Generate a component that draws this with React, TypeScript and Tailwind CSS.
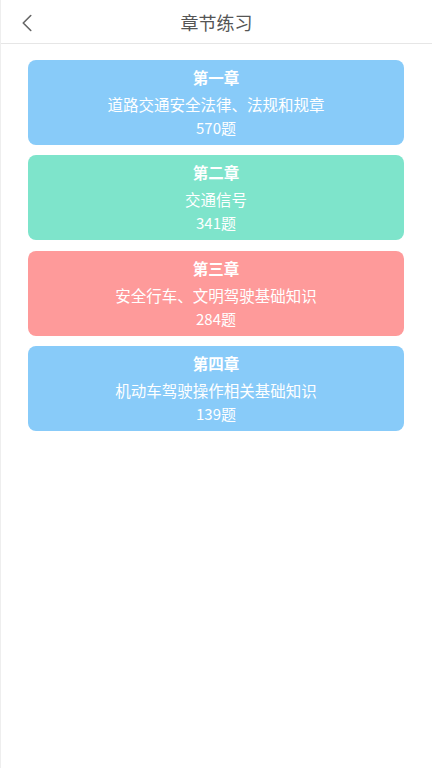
import { ChevronLeft } from 'lucide-react'

const chapters = [
  { title: '第一章', name: '道路交通安全法律、法规和规章', count: 570, color: 'bg-[#88cbf9]' },
  { title: '第二章', name: '交通信号', count: 341, color: 'bg-[#7ee4cb]' },
  { title: '第三章', name: '安全行车、文明驾驶基础知识', count: 284, color: 'bg-[#fe9a9a]' },
  { title: '第四章', name: '机动车驾驶操作相关基础知识', count: 139, color: 'bg-[#88cbf9]' },
]

export default function App() {
  return (
    <div
      className="w-[432px] h-[768px] bg-white border-l border-[#eeeeee] overflow-hidden"
      style={{ fontFamily: '"Noto Sans CJK SC", "Noto Sans", sans-serif' }}
    >
      <div className="relative h-[44px] flex items-center justify-center border-b border-[#e6e6e6]">
        <ChevronLeft className="absolute left-[11px] top-[8px] w-[30px] h-[30px] text-[#666666]" strokeWidth={1.3} />
        <h1 className="text-[18px] text-[#555555] leading-none">章节练习</h1>
      </div>

      <div className="flex flex-col gap-[10.5px] pt-[15.5px] pl-[27px] pr-[28px]">
        {chapters.map(c => (
          <div
            key={c.title}
            className={`${c.color} rounded-[8px] h-[85px] flex flex-col items-center pt-[7px] text-white`}
          >
            <div className="text-[15.5px] font-bold leading-[20px]">{c.title}</div>
            <div className="text-[15.5px] leading-[20px] mt-[7px]">{c.name}</div>
            <div className="text-[15px] leading-[20px] mt-[4px]">{c.count}题</div>
          </div>
        ))}
      </div>
    </div>
  )
}
